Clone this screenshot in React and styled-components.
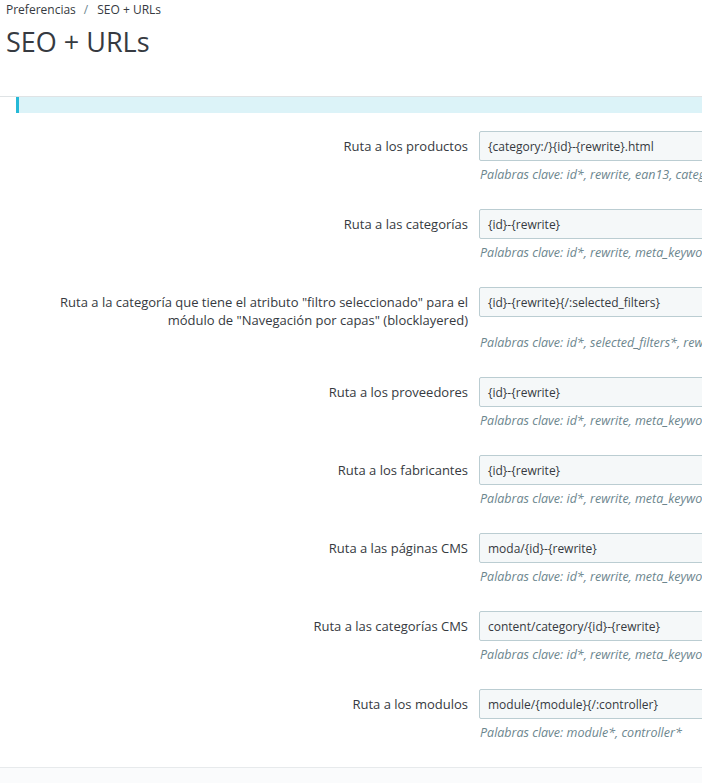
import React from "react";
import styled, { createGlobalStyle } from "styled-components";

const Global = createGlobalStyle`
  html, body { margin: 0; padding: 0; background: #fff; }
  body { font-family: "Open Sans", "Noto Sans", sans-serif; color: #363a41; overflow: hidden; }
  * { box-sizing: border-box; }
`;

const Page = styled.div`
  width: 702px;
  height: 783px;
  overflow: hidden;
  display: flex;
  flex-direction: column;
`;

const Header = styled.header`
  height: 97px;
  flex: none;
  padding: 1px 0 0 6px;
  border-bottom: 1px solid #dfe3e5;
  display: flex;
  flex-direction: column;
  gap: 6px;
`;

const Breadcrumb = styled.nav`
  display: flex;
  align-items: center;
  font-size: 12px;
  line-height: 18px;
  color: #363a41;
  white-space: nowrap;
`;

const Sep = styled.span`
  color: #6c868e;
  margin: 0 9px 0 8px;
`;

const Title = styled.h1`
  margin: 0;
  font-size: 27px;
  font-weight: 400;
  line-height: 34px;
  color: #363a41;
  white-space: nowrap;
`;

const Alert = styled.div`
  flex: none;
  margin-left: 16px;
  height: 16px;
  background: #dcf3f8;
  border-left: 3px solid #25b9d7;
`;

const Form = styled.div`
  flex: 1;
  display: flex;
  flex-direction: column;
  padding-top: 18px;
`;

const Group = styled.div`
  display: grid;
  grid-template-columns: 479px 620px;
  margin-bottom: 26px;
`;

const Label = styled.label`
  grid-column: 1;
  text-align: right;
  padding: 6px 11px 0 40px;
  font-size: 13px;
  line-height: 18px;
  color: #363a41;
`;

const Input = styled.div`
  grid-column: 2;
  align-self: start;
  height: 30px;
  padding: 1px 8px 0;
  display: flex;
  align-items: center;
  background: #f5f8f9;
  border: 1px solid #bbcdd2;
  border-radius: 2px;
  font-size: 12px;
  color: #363a41;
  white-space: nowrap;
`;

const Help = styled.div`
  grid-column: 2;
  margin-top: 5px;
  height: 17px;
  font-size: 12.5px;
  line-height: 17px;
  font-style: italic;
  color: #6c868e;
  white-space: nowrap;
  padding-left: 1px;
`;

const Footer = styled.div`
  flex: none;
  height: 16px;
  margin-top: auto;
  border-top: 1px solid #e7eaec;
  background: #fafbfc;
`;

const rows = [
  { label: "Ruta a los productos", value: "{category:/}{id}-{rewrite}.html", help: "Palabras clave: id*, rewrite, ean13, category, categories, reference, meta_keywords, meta_title, manufacturer, supplier, price, tags" },
  { label: "Ruta a las categorías", value: "{id}-{rewrite}", help: "Palabras clave: id*, rewrite, meta_keywords, meta_title" },
  { label: 'Ruta a la categoría que tiene el atributo "filtro seleccionado" para el módulo de "Navegación por capas" (blocklayered)', value: "{id}-{rewrite}{/:selected_filters}", help: "Palabras clave: id*, selected_filters*, rewrite, meta_keywords, meta_title" },
  { label: "Ruta a los proveedores", value: "{id}-{rewrite}", help: "Palabras clave: id*, rewrite, meta_keywords, meta_title" },
  { label: "Ruta a los fabricantes", value: "{id}-{rewrite}", help: "Palabras clave: id*, rewrite, meta_keywords, meta_title" },
  { label: "Ruta a las páginas CMS", value: "moda/{id}-{rewrite}", help: "Palabras clave: id*, rewrite, meta_keywords, meta_title" },
  { label: "Ruta a las categorías CMS", value: "content/category/{id}-{rewrite}", help: "Palabras clave: id*, rewrite, meta_keywords, meta_title" },
  { label: "Ruta a los modulos", value: "module/{module}{/:controller}", help: "Palabras clave: module*, controller*" },
];

export default function App() {
  return (
    <>
      <Global />
      <Page>
        <Header>
          <Breadcrumb>
            <span>Preferencias</span>
            <Sep>/</Sep>
            <span>SEO + URLs</span>
          </Breadcrumb>
          <Title>SEO + URLs</Title>
        </Header>
        <Alert />
        <Form>
          {rows.map((r, i) => (
            <Group key={i}>
              <Label>{r.label}</Label>
              <Input>{r.value}</Input>
              <Help>{r.help}</Help>
            </Group>
          ))}
        </Form>
        <Footer />
      </Page>
    </>
  );
}
